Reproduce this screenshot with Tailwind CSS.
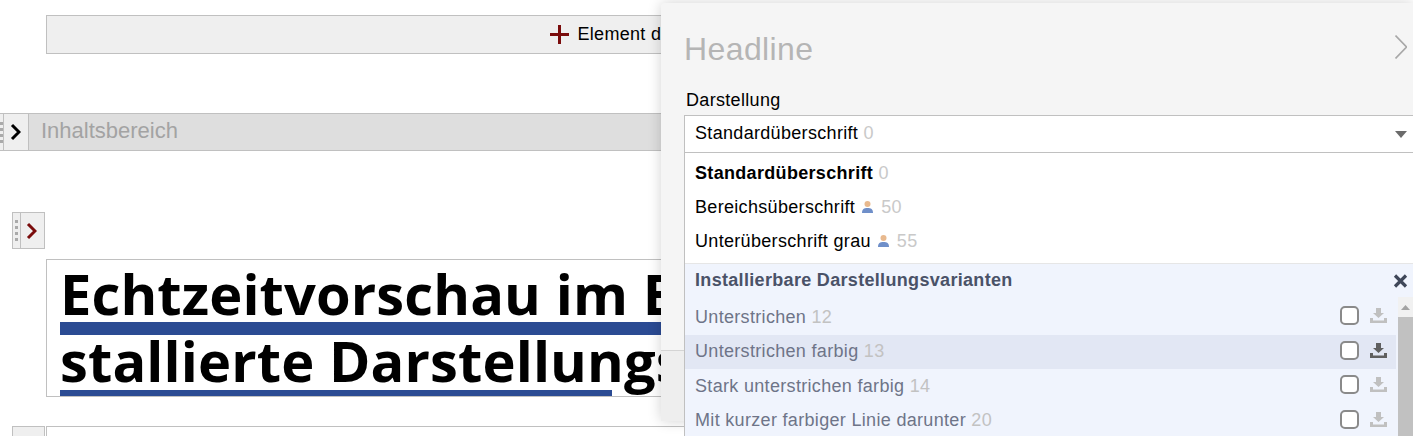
<!DOCTYPE html>
<html lang="de">
<head>
    <meta charset="UTF-8">
    <title>Headline</title>
    <script src="https://cdn.jsdelivr.net/npm/@tailwindcss/browser@4"></script>
</head>
<body class="bg-white">
<div class="relative w-[1413px] h-[436px] overflow-hidden font-['Liberation_Sans',Arial,sans-serif] text-black">

    <!-- Seiteninhalt -->
    <div class="pt-[15px]">
        <div class="ml-[46px] w-[1233px] h-[39px] flex items-center justify-center gap-[8px] bg-[#efefef] border border-[#c0c0c0] text-[18px] tracking-[0.32px]">
            <svg width="19" height="19" viewBox="0 0 19 19"><path d="M8 0h3v8h8v3h-8v8H8v-8H0V8h8z" fill="#7a0c0c"/></svg>
            <span>Element davor einfügen</span>
        </div>

        <div class="mt-[59px] h-[38px] flex bg-[#dedede] border-y border-[#c0c0c0]">
            <div class="w-[4px] bg-[#efefef] border-r border-[#c0c0c0] flex flex-col justify-center gap-[3px]">
                <i class="block w-[3px] h-[3px] bg-[#aaa]"></i><i class="block w-[3px] h-[3px] bg-[#aaa]"></i><i class="block w-[3px] h-[3px] bg-[#aaa]"></i><i class="block w-[3px] h-[3px] bg-[#aaa]"></i>
            </div>
            <div class="w-[25px] bg-[#efefef] border-r border-[#c0c0c0] flex items-center justify-center pr-[1px]">
                <svg width="11" height="18" viewBox="0 0 11 18"><path d="M2 2l7 7-7 7" fill="none" stroke="#000" stroke-width="3"/></svg>
            </div>
            <span class="ml-[12px] text-[22px] leading-[33px] text-[#a3a3a3]">Inhaltsbereich</span>
        </div>

        <div class="mt-[61px] ml-[12px] w-[33px] h-[37px] flex bg-[#efefef] border border-[#c0c0c0]">
            <div class="w-[8px] border-r border-[#c0c0c0] flex flex-col items-center justify-center gap-[3px]">
                <i class="block w-[3px] h-[3px] bg-[#aaa]"></i><i class="block w-[3px] h-[3px] bg-[#aaa]"></i><i class="block w-[3px] h-[3px] bg-[#aaa]"></i><i class="block w-[3px] h-[3px] bg-[#aaa]"></i>
            </div>
            <div class="flex-1 flex items-center justify-center pr-[2px]">
                <svg width="11" height="18" viewBox="0 0 11 18"><path d="M2 2l7 7-7 7" fill="none" stroke="#7a0c0c" stroke-width="3"/></svg>
            </div>
        </div>

        <div class="mt-[10px] ml-[46px] w-[1233px] h-[138px] border border-[#c0c0c0] pl-[13px] font-['Open_Sans',sans-serif] font-bold text-[56px] leading-[67px] tracking-[0.12px] overflow-hidden">
            <div class="whitespace-nowrap underline decoration-[#2b4b93] decoration-[13px] underline-offset-[7px] [text-decoration-skip-ink:none]">Echtzeitvorschau im Editor</div>
            <div class="relative whitespace-nowrap">stallierte Darstellungsvariante
                <span class="absolute left-0 -bottom-[2px] w-[552px] h-[6px] bg-[#2b4b93]"></span>
            </div>
        </div>

        <div class="mt-[29px] flex">
            <div class="ml-[12px] w-[33px] h-[38px] bg-[#efefef] border border-[#c0c0c0]"></div>
            <div class="ml-[1px] w-[1233px] h-[38px] border border-[#c0c0c0]"></div>
        </div>
    </div>

    <!-- Einstellungen -->
    <div class="absolute left-[661px] top-[3px] w-[752px] h-[418px] bg-[#f5f5f5] rounded-l-[3px] shadow-[0_0_14px_rgba(0,0,0,0.18)] pl-[23px] text-[18px] tracking-[0.32px]">
        <div class="flex items-center justify-between h-[68px] pt-[28px] pb-[4px]">
            <h2 class="text-[32px] leading-[36px] text-[#b5b5b5] tracking-[0.4px]">Headline</h2>
            <svg class="mr-[6px] -mt-[4px]" width="12" height="24" viewBox="0 0 12 24"><path d="M0.500 0.500l11 11.500-11 11.500" fill="none" stroke="#a8a8a8" stroke-width="1.600"/></svg>
        </div>
        <div class="mt-[19px] ml-[2px] leading-[20px] h-[25px]">Darstellung</div>

        <div class="relative z-10 border-l border-[#c0c0c0]">
            <div class="h-[38px] flex items-center justify-between bg-white border-y border-[#c0c0c0] pl-[10px] pr-[6px] pb-[2px]">
                <span>Standardüberschrift <span class="text-[#c9c9c9]">0</span></span>
                <svg class="mt-[2px]" width="12" height="7" viewBox="0 0 12 7"><path d="M0 0h12L6 7z" fill="#6b6b6b"/></svg>
            </div>

            <ul class="bg-white h-[110px] pt-[3px] pl-[10px] leading-[34px]">
                <li class="font-bold">Standardüberschrift <span class="font-normal text-[#c9c9c9]">0</span></li>
                <li class="flex items-center">Bereichsüberschrift
                    <svg class="ml-[7px] mr-[8px]" width="11" height="12" viewBox="0 0 11 12"><circle cx="5.500" cy="3" r="3" fill="#e8b98e"/><path d="M0 12c0-4 2-5 5.500-5S11 8 11 12z" fill="#6f8fc9"/></svg>
                    <span class="text-[#c9c9c9]">50</span></li>
                <li class="flex items-center">Unterüberschrift grau
                    <svg class="ml-[7px] mr-[8px]" width="11" height="12" viewBox="0 0 11 12"><circle cx="5.500" cy="3" r="3" fill="#e8b98e"/><path d="M0 12c0-4 2-5 5.500-5S11 8 11 12z" fill="#6f8fc9"/></svg>
                    <span class="text-[#c9c9c9]">55</span></li>
            </ul>

            <div class="h-[180px] bg-[#f0f4fd] border-t border-[#e6e6e6]">
                <div class="h-[33px] flex items-center justify-between pl-[10px] pr-[5px] font-bold text-[#4a5268]">
                    <span>Installierbare Darstellungsvarianten</span>
                    <svg width="15" height="14" viewBox="0 0 15 14"><path d="M2 1.500l11 11M13 1.500L2 12.500" stroke="#3f4759" stroke-width="3.200"/></svg>
                </div>
                <div class="flex">
                    <ul class="w-[711px] text-[#6e7488] pt-[3px]">
                        <li class="h-[34.5px] flex items-center justify-between pl-[10px] pr-[9px]">
                            <span>Unterstrichen <span class="text-[#c2c2c2]">12</span></span>
                            <span class="flex items-center gap-[11px] mb-[3px]"><i class="block w-[19px] h-[19px] bg-white border-2 border-[#8a8a8a] rounded-[5px]"></i><svg width="17" height="15" viewBox="0 0 17 15"><path d="M6 0h5v5h3l-5.500 5L3 5h3zM0 10h3v2.500h11V10h3v5H0z" fill="#c0c0c0"/></svg></span>
                        </li>
                        <li class="h-[34.5px] flex items-center justify-between pl-[10px] pr-[9px] bg-[#e2e7f4]">
                            <span>Unterstrichen farbig <span class="text-[#c2c2c2]">13</span></span>
                            <span class="flex items-center gap-[11px] mb-[3px]"><i class="block w-[19px] h-[19px] bg-white border-2 border-[#8a8a8a] rounded-[5px]"></i><svg width="17" height="15" viewBox="0 0 17 15"><path d="M6 0h5v5h3l-5.500 5L3 5h3zM0 10h3v2.500h11V10h3v5H0z" fill="#5f5f5f"/></svg></span>
                        </li>
                        <li class="h-[34.5px] flex items-center justify-between pl-[10px] pr-[9px]">
                            <span>Stark unterstrichen farbig <span class="text-[#c2c2c2]">14</span></span>
                            <span class="flex items-center gap-[11px] mb-[3px]"><i class="block w-[19px] h-[19px] bg-white border-2 border-[#8a8a8a] rounded-[5px]"></i><svg width="17" height="15" viewBox="0 0 17 15"><path d="M6 0h5v5h3l-5.500 5L3 5h3zM0 10h3v2.500h11V10h3v5H0z" fill="#c0c0c0"/></svg></span>
                        </li>
                        <li class="h-[34.5px] flex items-center justify-between pl-[10px] pr-[9px]">
                            <span>Mit kurzer farbiger Linie darunter <span class="text-[#c2c2c2]">20</span></span>
                            <span class="flex items-center gap-[11px] mb-[3px]"><i class="block w-[19px] h-[19px] bg-white border-2 border-[#8a8a8a] rounded-[5px]"></i><svg width="17" height="15" viewBox="0 0 17 15"><path d="M6 0h5v5h3l-5.500 5L3 5h3zM0 10h3v2.500h11V10h3v5H0z" fill="#c0c0c0"/></svg></span>
                        </li>
                    </ul>
                    <div class="ml-[2px] w-[15px] h-[140px] bg-[#f1f1f1]">
                        <div class="h-[20px] flex items-center justify-center"><svg width="9" height="5" viewBox="0 0 9 5"><path d="M4.500 0L9 5H0z" fill="#a3a3a3"/></svg></div>
                        <div class="h-[120px] bg-[#c1c1c1]"></div>
                    </div>
                </div>
            </div>
        </div>

        <!-- Fußleiste des Panels -->
        <div class="absolute left-0 right-0 bottom-0 h-[71px] bg-[#eeeeee] border-t border-[#d4d4d4]"></div>
    </div>
</div>
</body>
</html>
